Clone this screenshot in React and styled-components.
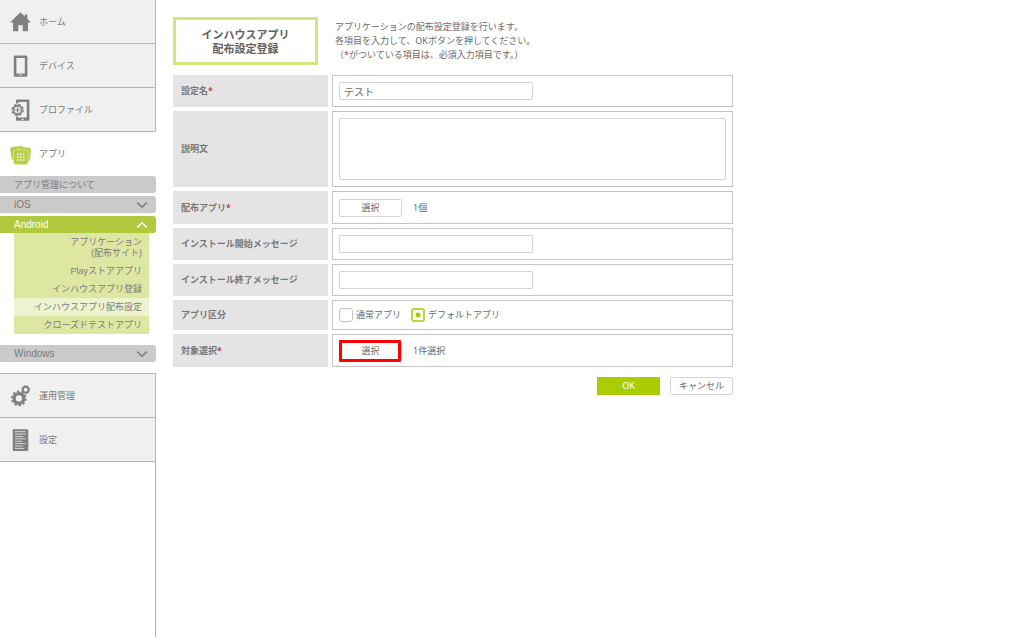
import React, { useState } from 'react';
import styled, { createGlobalStyle, css } from 'styled-components';

const GlobalStyle = createGlobalStyle`
  :root {
    --green: #aacc03;
    --menuGreen: #b0c93e;
    --line: #b4b4b4;
    --text: #6a6a6a;
    --menuText: #7a7a7a;
  }
  * {
    box-sizing: border-box;
  }
  body {
    margin: 0;
    background: #fff;
    color: var(--text);
    font-family: 'Noto Sans', 'Noto Sans CJK JP', sans-serif;
    font-size: 9px;
    line-height: 14px;
  }
  button,
  input,
  textarea {
    font-family: inherit;
    color: inherit;
  }
`;

const Layout = styled.div`
  display: flex;
  min-height: 100vh;
`;

const SidebarStyles = styled.nav`
  display: flex;
  flex-direction: column;
  flex: 0 0 156px;
  font-family: 'Liberation Sans', 'Noto Sans CJK JP', sans-serif;
  color: var(--menuText);
`;

const MenuGroup = styled.div`
  border-right: 1px solid var(--line);
  border-bottom-right-radius: 2px;
  ${({ $last }) =>
    $last &&
    css`
      flex: 1;
      margin-top: 11px;
      border-top: 1px solid var(--line);
      border-bottom-right-radius: 0;
    `}
`;

const MenuItem = styled.a`
  display: flex;
  align-items: center;
  gap: 7px;
  height: 44px;
  padding-left: 10px;
  color: inherit;
  text-decoration: none;
  background: ${({ $open }) => ($open ? '#fff' : '#f0f0f0')};
  border-bottom: 1px solid ${({ $open }) => ($open ? 'transparent' : 'var(--line)')};
  svg {
    flex: none;
    width: 22px;
    height: 22px;
    fill: #808080;
  }
`;

const SubMenu = styled.div`
  display: flex;
  flex-direction: column;
  gap: 3px;
`;

const SubMenuBar = styled.button`
  display: flex;
  align-items: center;
  justify-content: space-between;
  width: 100%;
  height: 17px;
  padding: 0 8px 0 14px;
  border: 0;
  border-radius: 0 3px 3px 0;
  font-size: ${({ $latin }) => ($latin ? '10px' : '9px')};
  text-align: left;
  background: ${({ $open }) => ($open ? 'var(--menuGreen)' : '#cacaca')};
  color: ${({ $open }) => ($open ? '#fff' : 'inherit')};
  svg {
    width: 12px;
    height: 8px;
    fill: none;
    stroke: currentColor;
    stroke-width: 1.5;
  }
`;

const SubList = styled.ul`
  list-style: none;
  margin: 0 7px 8px 14px;
  padding: 0;
  background: #dde7a2;
`;

const SubLink = styled.a`
  display: block;
  padding: 4px 7px 3px;
  line-height: 11px;
  text-align: right;
  text-decoration: none;
  color: inherit;
  background: ${({ $current }) => ($current ? '#eef4d0' : 'transparent')};
`;

const Main = styled.main`
  flex: 1;
  min-width: 0;
  max-width: 594px;
  padding: 17px;
`;

const PageHeader = styled.header`
  display: flex;
  align-items: center;
  gap: 17px;
  margin-bottom: 10px;
`;

const PageTitle = styled.h1`
  flex: 0 0 145px;
  margin: 0;
  padding: 8px 0 6px;
  border: 3px solid #d3e67c;
  font-size: 11px;
  line-height: 14px;
  font-weight: 700;
  text-align: center;
  color: #606060;
`;

const Lead = styled.p`
  margin: 0;
`;

const Required = styled.span`
  color: #cc3840;
`;

const FormStyles = styled.form`
  display: flex;
  flex-direction: column;
  gap: 4px;
`;

const FormRow = styled.div`
  display: grid;
  grid-template-columns: 155px 1fr;
  gap: 4px;
`;

const Label = styled.label`
  display: flex;
  align-items: center;
  padding: 0 8px;
  font-weight: 700;
  color: #777;
  background: #e4e4e4;
`;

const Field = styled.div`
  display: flex;
  align-items: center;
  padding: 6px;
  border: 1px solid #c4c4c4;
`;

const TextInput = styled.input`
  width: 194px;
  height: 18px;
  padding: 0 4px;
  border: 1px solid #d4d4d4;
  border-radius: 2px;
  font-size: 10px;
  background: #fff;
`;

const TextArea = styled.textarea`
  width: 100%;
  height: 62px;
  padding: 4px;
  border: 1px solid #d4d4d4;
  border-radius: 2px;
  font-size: 10px;
  resize: none;
`;

const Button = styled.button`
  position: relative;
  width: 63px;
  height: 18px;
  padding: 0;
  border: 1px solid #d4d4d4;
  border-radius: 2px;
  font-size: 9px;
  line-height: 14px;
  background: #fff;
  ${({ $primary }) =>
    $primary &&
    css`
      border-color: var(--green);
      border-radius: 0;
      background: var(--green);
      color: #fff;
    `}
  ${({ $marked }) =>
    $marked &&
    css`
      &::after {
        content: '';
        position: absolute;
        inset: -3px 0 -3px -1px;
        border: 3px solid #f00;
        border-radius: 1px;
      }
    `}
`;

const Picker = styled.div`
  display: flex;
  align-items: center;
  gap: 11px;
  height: 19px;
`;

const Choices = styled.div`
  display: flex;
  align-items: center;
  gap: 10px;
  height: 16px;
`;

const Choice = styled.label`
  display: flex;
  align-items: center;
  gap: 3px;
`;

const Radio = styled.input`
  appearance: none;
  width: 14px;
  height: 14px;
  margin: 0;
  border: 1px solid #c4c4c4;
  border-radius: 3px;
  background: #fff;
  &:checked {
    border: 2px solid #b9d93a;
    background: radial-gradient(circle, var(--green) 2px, #fff 3px);
  }
`;

const Actions = styled.div`
  display: flex;
  justify-content: flex-end;
  gap: 10px;
  margin-top: 6px;
`;

function HomeIcon() {
  return (
    <svg viewBox="0 0 22 22">
      <path d="M10.5 1.2 0 11.6h3V19.4q0 .8.8.8h4.5v-6h4.4v6h4.5q.8 0 .8-.8V11.6h3L17.4 8V3.4h-2.6v2.1z" />
    </svg>
  );
}

function PhoneIcon() {
  return (
    <svg viewBox="0 0 22 22">
      <path
        fillRule="evenodd"
        d="M5 .5h11.2q1.2 0 1.2 1.2v18.8q0 1.2-1.2 1.2H5q-1.2 0-1.2-1.2V1.7Q3.8.5 5 .5zM6.4 3v15.6h8.4V3zM9.4 19.6v1h2.4v-1z"
      />
    </svg>
  );
}

// teeth are drawn as a dashed ring around the body
function Gear({ cx, cy, r, width, tooth, count }) {
  const ringRadius = r + tooth / 2 - 0.2;
  const dash = (2 * Math.PI * ringRadius) / (count * 2);
  return (
    <g fill="none" stroke="#808080">
      <circle cx={cx} cy={cy} r={r - width / 2} strokeWidth={width} />
      <circle
        cx={cx}
        cy={cy}
        r={ringRadius}
        strokeWidth={tooth}
        strokeDasharray={`${dash * 1.1} ${dash * 0.9}`}
      />
    </g>
  );
}

function ProfileIcon() {
  return (
    <svg viewBox="0 0 22 22">
      <path
        fillRule="evenodd"
        d="M7.2.4h11q1.2 0 1.2 1.2v19q0 1.2-1.2 1.2h-11Q6 21.8 6 20.6v-19Q6 .4 7.2.4zM8.2 2.9v15.6h8.6V2.9zM11.4 19.7v1h2.4v-1z"
      />
      <circle cx="7.6" cy="11" r="6.7" fill="#f0f0f0" />
      <Gear cx={7.6} cy={11} r={5.2} width={1.9} tooth={1.3} count={8} />
      <path d="M7 8.4h1.2v2h2v1.2h-2v2H7v-2H5v-1.2h2z" />
    </svg>
  );
}

function AppIcon() {
  const dots = [0, 1, 2];
  return (
    <svg viewBox="0 0 22 22">
      <g fill="#b4cd42">
        <rect x="0.9" y="3.4" width="13" height="13" rx="2" transform="rotate(-9 7.4 10)" />
        <rect
          x="7.6"
          y="4.2"
          width="13"
          height="14"
          rx="2"
          stroke="#e3edb8"
          strokeWidth="0.5"
          transform="rotate(7 14 11)"
        />
        <rect x="3.6" y="6.8" width="14.4" height="14.6" rx="2.2" stroke="#e3edb8" strokeWidth="0.7" />
      </g>
      {dots.map((row) =>
        dots.map((col) => (
          <rect
            key={`${row}-${col}`}
            x={7.1 + col * 2.9}
            y={10.4 + row * 2.9}
            width="1.7"
            height="1.7"
            fill="#f3f7dd"
          />
        ))
      )}
    </svg>
  );
}

function GearsIcon() {
  return (
    <svg viewBox="0 0 22 22">
      <Gear cx={8.9} cy={13.4} r={6.5} width={3.4} tooth={1.6} count={10} />
      <Gear cx={15.7} cy={4.7} r={3.9} width={2} tooth={0.8} count={9} />
    </svg>
  );
}

function DocumentIcon() {
  const lines = [10.5, 10.5, 8, 10.5, 7, 10.5, 8, 9];
  return (
    <svg viewBox="0 0 22 22">
      <rect x="2.7" y="0.3" width="15.6" height="21.6" rx="1" />
      {lines.map((width, i) => (
        <rect key={i} x="5" y={2.2 + i * 2.4} width={width} height="0.9" fill="#dcdcdc" />
      ))}
    </svg>
  );
}

function Chevron({ up }) {
  return (
    <svg viewBox="0 0 12 8">
      <path d={up ? 'M1.2 6.4 6 1.8l4.8 4.6' : 'M1.2 1.6 6 6.2l4.8-4.6'} />
    </svg>
  );
}

const androidLinks = [
  'Playストアアプリ',
  'インハウスアプリ登録',
  'インハウスアプリ配布設定',
  'クローズドテストアプリ',
];

function Sidebar() {
  return (
    <SidebarStyles>
      <MenuGroup>
        <MenuItem href="#home">
          <HomeIcon />
          ホーム
        </MenuItem>
        <MenuItem href="#device">
          <PhoneIcon />
          デバイス
        </MenuItem>
        <MenuItem href="#profile">
          <ProfileIcon />
          プロファイル
        </MenuItem>
      </MenuGroup>
      <MenuItem href="#app" $open>
        <AppIcon />
        アプリ
      </MenuItem>
      <SubMenu>
        <SubMenuBar type="button">アプリ管理について</SubMenuBar>
        <SubMenuBar type="button" $latin>
          iOS
          <Chevron />
        </SubMenuBar>
        <div>
          <SubMenuBar type="button" $latin $open>
            Android
            <Chevron up />
          </SubMenuBar>
          <SubList>
            <li>
              <SubLink href="#site">
                アプリケーション
                <br />
                (配布サイト)
              </SubLink>
            </li>
            {androidLinks.map((name) => (
              <li key={name}>
                <SubLink href="#android" $current={name === 'インハウスアプリ配布設定'}>
                  {name}
                </SubLink>
              </li>
            ))}
          </SubList>
        </div>
        <SubMenuBar type="button" $latin>
          Windows
          <Chevron />
        </SubMenuBar>
      </SubMenu>
      <MenuGroup $last>
        <MenuItem href="#operation">
          <GearsIcon />
          運用管理
        </MenuItem>
        <MenuItem href="#settings">
          <DocumentIcon />
          設定
        </MenuItem>
      </MenuGroup>
    </SidebarStyles>
  );
}

export default function App() {
  const [name, setName] = useState('テスト');
  const [type, setType] = useState('default');

  return (
    <>
      <GlobalStyle />
      <Layout>
        <Sidebar />
        <Main>
          <PageHeader>
            <PageTitle>
              インハウスアプリ
              <br />
              配布設定登録
            </PageTitle>
            <Lead>
              アプリケーションの配布設定登録を行います。
              <br />
              各項目を入力して、OKボタンを押してください。
              <br />
              （<Required>*</Required>がついている項目は、必須入力項目です。）
            </Lead>
          </PageHeader>
          <FormStyles onSubmit={(e) => e.preventDefault()}>
            <FormRow>
              <Label htmlFor="name">
                設定名<Required>*</Required>
              </Label>
              <Field>
                <TextInput id="name" value={name} onChange={(e) => setName(e.target.value)} />
              </Field>
            </FormRow>
            <FormRow>
              <Label htmlFor="description">説明文</Label>
              <Field>
                <TextArea id="description" />
              </Field>
            </FormRow>
            <FormRow>
              <Label htmlFor="apps">
                配布アプリ<Required>*</Required>
              </Label>
              <Field>
                <Picker>
                  <Button id="apps" type="button">
                    選択
                  </Button>
                  <span>1個</span>
                </Picker>
              </Field>
            </FormRow>
            <FormRow>
              <Label htmlFor="startMessage">インストール開始メッセージ</Label>
              <Field>
                <TextInput id="startMessage" />
              </Field>
            </FormRow>
            <FormRow>
              <Label htmlFor="endMessage">インストール終了メッセージ</Label>
              <Field>
                <TextInput id="endMessage" />
              </Field>
            </FormRow>
            <FormRow>
              <Label as="div" id="typeLabel">
                アプリ区分
              </Label>
              <Field>
                <Choices role="radiogroup" aria-labelledby="typeLabel">
                  <Choice>
                    <Radio
                      type="radio"
                      name="type"
                      checked={type === 'normal'}
                      onChange={() => setType('normal')}
                    />
                    通常アプリ
                  </Choice>
                  <Choice>
                    <Radio
                      type="radio"
                      name="type"
                      checked={type === 'default'}
                      onChange={() => setType('default')}
                    />
                    デフォルトアプリ
                  </Choice>
                </Choices>
              </Field>
            </FormRow>
            <FormRow>
              <Label htmlFor="targets">
                対象選択<Required>*</Required>
              </Label>
              <Field>
                <Picker>
                  <Button id="targets" type="button" $marked>
                    選択
                  </Button>
                  <span>1件選択</span>
                </Picker>
              </Field>
            </FormRow>
            <Actions>
              <Button type="submit" $primary>
                OK
              </Button>
              <Button type="button">キャンセル</Button>
            </Actions>
          </FormStyles>
        </Main>
      </Layout>
    </>
  );
}
